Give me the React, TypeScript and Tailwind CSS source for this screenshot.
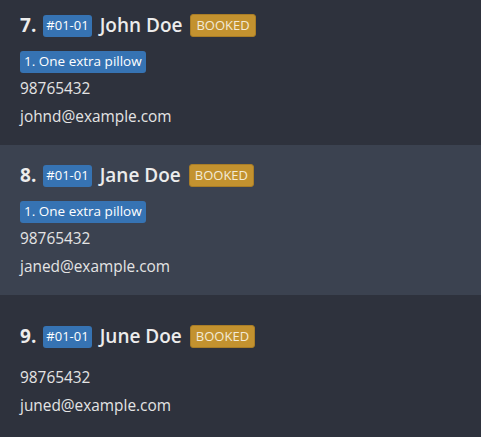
import React from 'react';

type Guest = {
  index: number;
  room: string;
  name: string;
  phone: string;
  email: string;
  remarks: string[];
};

const guests: Guest[] = [
  { index: 7, room: '#01-01', name: 'John Doe', phone: '98765432', email: 'johnd@example.com', remarks: ['1. One extra pillow'] },
  { index: 8, room: '#01-01', name: 'Jane Doe', phone: '98765432', email: 'janed@example.com', remarks: ['1. One extra pillow'] },
  { index: 9, room: '#01-01', name: 'June Doe', phone: '98765432', email: 'juned@example.com', remarks: [] },
];

const GuestCard: React.FC<{ guest: Guest; selected: boolean }> = ({ guest, selected }) => (
  <div
    className={`h-[150px] flex flex-col justify-center gap-[5px] pl-5 pb-[6px] ${
      selected ? 'bg-[#3b4250]' : 'bg-[#2e323d]'
    }`}
  >
    {/* header row */}
    <div className="h-[40px] flex items-center">
      <span className="text-[19px] font-bold text-[#ececec] mr-[7px]">{guest.index}.</span>
      <span className="h-[22px] flex items-center px-[3px] rounded-[3px] bg-[#3673b3] text-[13px] text-white mr-[8px]">
        {guest.room}
      </span>
      <span className="text-[19px] font-semibold text-[#ececec] mr-[8px]">{guest.name}</span>
      <span className="h-[23px] flex items-center px-[5px] rounded-[3px] bg-[#c3922f] border border-[#a97d26] text-[13px] text-[#f3ead6]">
        BOOKED
      </span>
    </div>

    {/* remarks */}
    <div className="flex gap-1">
      {guest.remarks.map((r) => (
        <span
          key={r}
          className="h-[22px] flex items-center px-[4px] rounded-[3px] bg-[#3673b3] text-[13.5px] text-white"
        >
          {r}
        </span>
      ))}
    </div>

    <div className="h-[23px] flex items-center text-[15.4px] text-[#e4e4e4]">{guest.phone}</div>
    <div className="h-[23px] flex items-center text-[15.4px] text-[#e4e4e4]">{guest.email}</div>
  </div>
);

const App: React.FC = () => {
  return (
    <div
      className="w-[481px] h-[437px] overflow-hidden bg-[#2e323d]"
      style={{ fontFamily: '"Open Sans", "Noto Sans", sans-serif' }}
    >
      <div className="-mt-[5px]">
        {guests.map((g) => (
          <GuestCard key={g.index} guest={g} selected={g.index === 8} />
        ))}
      </div>
    </div>
  );
};

export default App;
